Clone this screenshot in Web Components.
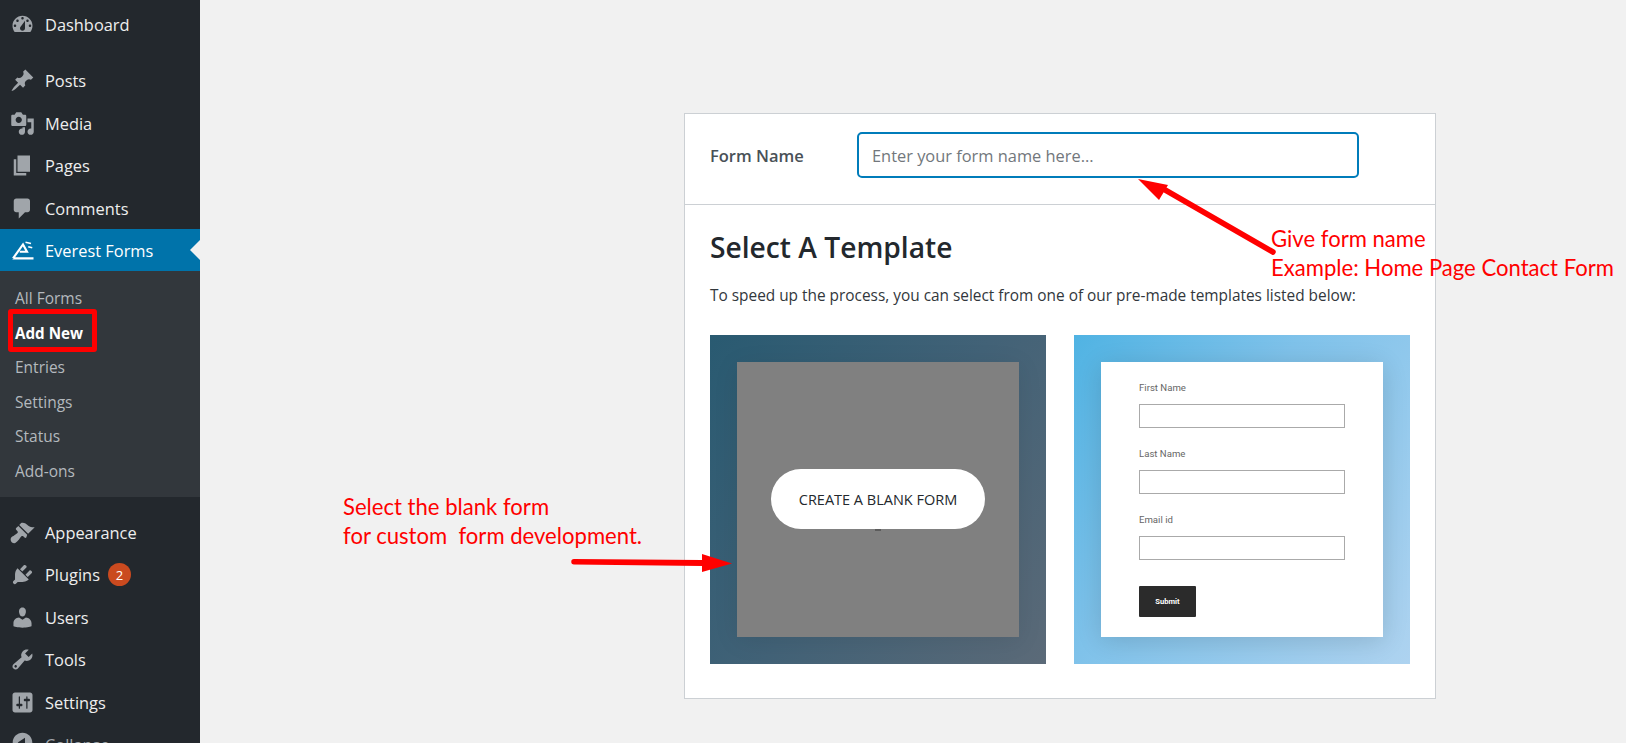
<!DOCTYPE html>
<html lang="en">
<head>
<meta charset="utf-8">
<title>Everest Forms - Add New</title>
<style>
  html, body { margin: 0; height: 743px; overflow: hidden; background: #f1f1f1; }
  body { font-family: "Open Sans", sans-serif; }
  #page { position: relative; display: flex; height: 743px; overflow: hidden; }
</style>
</head>
<body>
<div id="page">
  <wp-sidebar>
    <wp-menu-item icon="dashboard" label="Dashboard"></wp-menu-item>
    <wp-menu-separator size="14"></wp-menu-separator>
    <wp-menu-item icon="posts" label="Posts"></wp-menu-item>
    <wp-menu-item icon="media" label="Media"></wp-menu-item>
    <wp-menu-item icon="pages" label="Pages"></wp-menu-item>
    <wp-menu-item icon="comments" label="Comments"></wp-menu-item>
    <wp-menu-item icon="everest" label="Everest Forms" active></wp-menu-item>
    <wp-submenu>
      <wp-submenu-item>All Forms</wp-submenu-item>
      <wp-submenu-item current>Add New</wp-submenu-item>
      <wp-submenu-item>Entries</wp-submenu-item>
      <wp-submenu-item>Settings</wp-submenu-item>
      <wp-submenu-item>Status</wp-submenu-item>
      <wp-submenu-item>Add-ons</wp-submenu-item>
    </wp-submenu>
    <wp-menu-separator size="14"></wp-menu-separator>
    <wp-menu-item icon="appearance" label="Appearance"></wp-menu-item>
    <wp-menu-item icon="plugins" label="Plugins" badge="2"></wp-menu-item>
    <wp-menu-item icon="users" label="Users"></wp-menu-item>
    <wp-menu-item icon="tools" label="Tools"></wp-menu-item>
    <wp-menu-item icon="settings" label="Settings"></wp-menu-item>
    <wp-menu-item icon="collapse" label="Collapse" dim></wp-menu-item>
  </wp-sidebar>

  <form-panel>
    <template-tile slot="tiles" variant="blank"><blank-overlay></blank-overlay></template-tile>
    <template-tile slot="tiles" variant="contact"><mini-form></mini-form></template-tile>
  </form-panel>

  <red-note x="1271" y="225">Give form name<br>Example: Home Page Contact Form</red-note>
  <red-note x="343" y="493">Select the blank form<br>for custom&nbsp; form development.</red-note>
  <red-arrows></red-arrows>
</div>

<script>
const ICONS = {
  dashboard: '<path fill-rule="evenodd" d="M3.76 16h12.48c1.1-1.37 1.76-3.11 1.76-5 0-4.42-3.58-8-8-8s-8 3.58-8 8c0 1.89.66 3.63 1.76 5zM10 4c.55 0 1 .45 1 1s-.45 1-1 1-1-.45-1-1 .45-1 1-1zM6 6c.55 0 1 .45 1 1s-.45 1-1 1-1-.45-1-1 .45-1 1-1zm8 0c.55 0 1 .45 1 1s-.45 1-1 1-1-.45-1-1 .45-1 1-1zm-5.37 5.55L12 7v6c0 1.1-.9 2-2 2s-2-.9-2-2c0-.57.24-1.08.63-1.45zM4 10c.55 0 1 .45 1 1s-.45 1-1 1-1-.45-1-1 .45-1 1-1zm12 0c.55 0 1 .45 1 1s-.45 1-1 1-1-.45-1-1 .45-1 1-1z"/>',
  posts: '<path d="M10.44 3.02l1.82-1.82 6.36 6.35-1.83 1.82c-1.05-.68-2.48-.57-3.41.36l-.75.75c-.92.93-1.04 2.35-.35 3.41l-1.83 1.82-2.41-2.41-2.8 2.79c-.42.42-3.38 2.71-3.8 2.29s1.86-3.39 2.28-3.81l2.79-2.79L4.1 9.36l1.83-1.82c1.05.69 2.48.57 3.4-.36l.75-.75c.93-.92 1.05-2.35.36-3.41z"/>',
  media: '<path fill-rule="evenodd" d="M13 11V4c0-.55-.45-1-1-1h-1.67L9 1H5L3.67 3H2c-.55 0-1 .45-1 1v7c0 .55.45 1 1 1h10c.55 0 1-.45 1-1zM7 4.5c1.38 0 2.5 1.12 2.5 2.5S8.38 9.5 7 9.5 4.5 8.38 4.5 7 5.62 4.5 7 4.5zM14 6h5v10.5c0 1.38-1.12 2.5-2.5 2.5S14 17.88 14 16.5s1.12-2.5 2.5-2.5c.17 0 .34.02.5.05V9h-3V6zm-4 8.05V13h2v3.5c0 1.38-1.12 2.5-2.5 2.5S7 17.88 7 16.5 8.12 14 9.5 14c.17 0 .34.02.5.05z"/>',
  pages: '<path d="M6 15V2h10v13H6zm-1 1h8v2H3V5h2v11z"/>',
  comments: '<path d="M5 2h9c1.1 0 2 .9 2 2v7c0 1.1-.9 2-2 2h-2l-5 5v-5H5c-1.1 0-2-.9-2-2V4c0-1.1.9-2 2-2z"/>',
  everest: '<path fill="none" stroke="#fff" stroke-width="1.7" d="M2.4 16.3 10.4 5.2 13.6 11H7.8M2 16.3h16.8"/><path fill="none" stroke="#fff" stroke-width="1.4" d="M12.4 3.4l4.4 1M14.6 7l3.2.8"/>',
  appearance: '<path d="M14.48 11.06L7.41 3.99l1.5-1.5c.5-.56 2.3-.47 3.51.32 1.21.8 1.43 1.28 2.91 2.1 1.18.64 2.45 1.26 4.45.85zm-.71.71L6.7 4.7 4.93 6.47c-.39.39-.39 1.02 0 1.41l1.06 1.06c.39.39.39 1.03 0 1.42-.6.6-1.43 1.11-2.21 1.69-.35.26-.7.53-1.01.84C1.43 13.23.5 14.4.5 15.5c0 1.66 1.34 3 3 3 1.1 0 1.77-.93 3.12-2.27.31-.31.58-.66.84-1.01.58-.78 1.09-1.61 1.69-2.21.39-.39 1.03-.39 1.42 0l1.06 1.06c.39.39 1.02.39 1.41 0z"/>',
  plugins: '<path d="M13.11 4.36L9.87 7.6 8 5.73l3.24-3.24c.35-.34 1.05-.2 1.56.32.52.51.66 1.21.31 1.55zm-8 1.77l.91-1.12 9.01 9.01-1.19.84c-.71.71-2.63 1.16-3.82 1.16H6.14L4.9 17.26c-.59.59-1.54.59-2.12 0-.59-.58-.59-1.53 0-2.12l1.24-1.24v-3.88c0-1.13.4-3.19 1.09-3.89zm7.26 3.97l3.24-3.24c.34-.35 1.04-.21 1.55.31.52.51.66 1.21.31 1.55l-3.24 3.25z"/>',
  users: '<path d="M10 9.25c-2.27 0-2.73-3.44-2.73-3.44C7 4.02 7.82 2 9.97 2c2.16 0 2.98 2.02 2.71 3.81 0 0-.41 3.44-2.68 3.44zm0 2.57L12.72 10c2.39 0 4.52 2.33 4.52 4.53v2.49s-3.65 1.13-7.24 1.13c-3.65 0-7.24-1.13-7.24-1.13v-2.49c0-2.25 1.94-4.48 4.47-4.48z"/>',
  tools: '<path fill-rule="evenodd" d="M16.68 9.77c-1.34 1.34-3.3 1.67-4.95.99l-5.41 6.52c-.99.99-2.59.99-3.58 0s-.99-2.59 0-3.57l6.52-5.42c-.68-1.65-.35-3.61.99-4.95 1.28-1.28 3.12-1.62 4.72-1.06l-2.89 2.89 2.82 2.82 2.86-2.87c.53 1.58.18 3.39-1.08 4.65zM3.81 16.21c.4.39 1.04.39 1.43 0 .4-.4.4-1.04 0-1.43-.39-.4-1.03-.4-1.43 0-.39.39-.39 1.03 0 1.43z"/>',
  settings: '<path fill-rule="evenodd" d="M18 16V4c0-1.1-.9-2-2-2H4c-1.1 0-2 .9-2 2v12c0 1.1.9 2 2 2h12c1.1 0 2-.9 2-2zM8 11h1c.55 0 1 .45 1 1s-.45 1-1 1H8v1.5c0 .28-.22.5-.5.5s-.5-.22-.5-.5V13H6c-.55 0-1-.45-1-1s.45-1 1-1h1V5.5c0-.28.22-.5.5-.5s.5.22.5.5V11zm5-2h-1c-.55 0-1-.45-1-1s.45-1 1-1h1V5.5c0-.28.22-.5.5-.5s.5.22.5.5V7h1c.55 0 1 .45 1 1s-.45 1-1 1h-1v5.5c0 .28-.22.5-.5.5s-.5-.22-.5-.5V9z"/>',
  collapse: '<path fill-rule="evenodd" d="M10 2.16c4.33 0 7.84 3.51 7.84 7.84s-3.51 7.84-7.84 7.84S2.16 14.33 2.16 10 5.710 2.16 10 2.160zm2 11.720V6.120L6.180 9.970z"/>',
};

class WpSidebar extends HTMLElement {
  connectedCallback() {
    this.attachShadow({ mode: "open" }).innerHTML = `
      <style>
        :host { display: block; flex: none; width: 200px; height: 743px; overflow: hidden; background: #23282d; padding-top: 3px; box-sizing: border-box; }
      </style>
      <slot></slot>`;
  }
}

class WpMenuSeparator extends HTMLElement {
  connectedCallback() {
    this.attachShadow({ mode: "open" }).innerHTML = `
      <style>:host { display: block; height: ${this.getAttribute("size") || 13}px; }</style>`;
  }
}

class WpMenuItem extends HTMLElement {
  connectedCallback() {
    const icon = ICONS[this.getAttribute("icon")] || "";
    const badge = this.getAttribute("badge");
    this.attachShadow({ mode: "open" }).innerHTML = `
      <style>
        :host { display: flex; align-items: center; position: relative; height: 42.5px; color: #eee; font: 400 16.4px "Open Sans", sans-serif; }
        :host([active]) { background: #0073aa; color: #fff; height: 42px; margin-top: -.5px; }
        :host([active])::after { content: ""; position: absolute; right: 0; top: 50%; margin-top: -10px; border: 10px solid transparent; border-right-color: #f1f1f1; border-left-width: 0; }
        :host([dim]) { color: #a0a5aa; margin-top: -2px; }
        :host([dim]) .label { position: relative; top: 2px; }
        svg { flex: none; width: 25px; height: 25px; margin: 0 10px 0 10px; fill: #a0a5aa; }
        :host([icon="settings"]) svg { margin-top: .6px; }
        :host([active]) svg { fill: #fff; }
        .badge { display: inline-flex; align-items: center; justify-content: center; width: 23px; height: 23px; margin-left: 8px; border-radius: 50%; background: #ca4a1f; color: #fff; font-size: 13px; }
      </style>
      <svg viewBox="0 0 20 20">${icon}</svg>
      <span class="label">${this.getAttribute("label")}</span>
      ${badge ? `<span class="badge">${badge}</span>` : ""}`;
  }
}

class WpSubmenu extends HTMLElement {
  connectedCallback() {
    this.attachShadow({ mode: "open" }).innerHTML = `
      <style>:host { display: block; background: #32373c; padding: 10px 0 9px; }</style>
      <slot></slot>`;
  }
}

class WpSubmenuItem extends HTMLElement {
  connectedCallback() {
    this.attachShadow({ mode: "open" }).innerHTML = `
      <style>
        :host { display: flex; align-items: center; position: relative; height: 34.5px; padding-left: 15px; color: #b4b9be; font: 400 15.5px "Open Sans", sans-serif; }
        :host([current]) { color: #fff; font-weight: 700; font-size: 15.2px; }
        :host([current])::before { content: ""; position: absolute; left: 8px; top: -7px; width: 79px; height: 33px; border: 5px solid #f00; border-radius: 3px; }
      </style>
      <slot></slot>`;
  }
}

class FormPanel extends HTMLElement {
  connectedCallback() {
    this.attachShadow({ mode: "open" }).innerHTML = `
      <style>
        :host { display: block; flex: none; box-sizing: border-box; width: 752px; height: 586px; margin: 113px 0 0 484px; background: #fff; border: 1px solid #ccd0d4; color: #23282d; font-family: "Open Sans", sans-serif; }
        .head { display: flex; align-items: flex-start; box-sizing: border-box; height: 91px; padding: 18px 25px 0; border-bottom: 1px solid #ccd0d4; }
        .head label { flex: none; width: 147px; height: 46px; line-height: 48px; color: #495157; font-size: 16.5px; font-weight: 600; }
        .name { box-sizing: border-box; width: 502px; height: 46px; padding-left: 13px; line-height: 44px; border: 2px solid #007cba; border-radius: 5px; color: #72777c; font-size: 16.4px; }
        .body { padding: 0 25px; }
        h2 { margin: 0; padding-top: 22px; height: 40px; line-height: 40px; font-size: 28.2px; font-weight: 600; color: #23282d; }
        p { margin: 0; padding-top: 17px; height: 24px; line-height: 24px; font-size: 15.4px; color: #32373c; }
        .tiles { display: grid; grid-template-columns: 336px 336px; gap: 28px; margin-top: 27px; }
      </style>
      <div class="head">
        <label>Form Name</label>
        <div class="name">Enter your form name here...</div>
      </div>
      <div class="body">
        <h2>Select A Template</h2>
        <p>To speed up the process, you can select from one of our pre-made templates listed below:</p>
        <div class="tiles"><slot name="tiles"></slot></div>
      </div>`;
  }
}

class TemplateTile extends HTMLElement {
  connectedCallback() {
    this.attachShadow({ mode: "open" }).innerHTML = `
      <style>
        :host { display: block; height: 329px; box-sizing: border-box; padding: 27px; background: linear-gradient(125deg, #50b3e3 0%, #7fc2ea 40%, #aed3f0 100%); }
        :host([variant="blank"]) { background: linear-gradient(125deg, #295a71 0%, #426277 50%, #5b6a78 100%); }
        .card { height: 275px; background: #fff; box-shadow: 0 4px 24px rgba(0,0,0,.14); }
        :host([variant="blank"]) .card { background: #808080; box-shadow: 0 4px 24px rgba(0,0,0,.08); }
      </style>
      <div class="card"><slot></slot></div>`;
  }
}

class BlankOverlay extends HTMLElement {
  connectedCallback() {
    this.attachShadow({ mode: "open" }).innerHTML = `
      <style>
        :host { display: flex; align-items: center; justify-content: center; height: 100%; }
        .pill { position: relative; box-sizing: border-box; display: flex; align-items: center; justify-content: center; width: 214px; height: 60px; margin-top: -1px; padding-top: 1px; border-radius: 30px; background: #fff; color: #23282d; font: 400 14.5px "Open Sans", sans-serif; }
        .pill::after { content: ""; position: absolute; left: 104px; top: 60px; width: 6px; height: 2px; background: #5c5c5c; }
      </style>
      <div class="pill">CREATE A BLANK FORM</div>`;
  }
}

class MiniForm extends HTMLElement {
  connectedCallback() {
    const field = (label) => `<div class="lbl">${label}</div><div class="inp"></div>`;
    this.attachShadow({ mode: "open" }).innerHTML = `
      <style>
        :host { display: block; padding: 18px 38px 0; font-family: Roboto, sans-serif; }
        .lbl { height: 16px; line-height: 16px; font-size: 9.6px; color: #666; }
        .inp { box-sizing: border-box; height: 24px; margin: 8px 0 18px; border: 1px solid #aaa; }
        .btn { display: flex; align-items: center; justify-content: center; width: 57px; height: 31px; margin-top: 26px; border-radius: 1px; background: #2b2b2b; color: #fff; font-size: 7.6px; font-weight: 700; }
      </style>
      ${field("First Name")}${field("Last Name")}${field("Email id")}
      <div class="btn">Submit</div>`;
  }
}

// annotations sit on the screenshot itself, so they go by page coordinates
class RedNote extends HTMLElement {
  connectedCallback() {
    this.attachShadow({ mode: "open" }).innerHTML = `
      <style>
        :host { position: absolute; left: ${this.getAttribute("x")}px; top: ${this.getAttribute("y")}px; color: #f00; font: 400 22.1px/28.5px Lato, sans-serif; white-space: nowrap; }
      </style>
      <slot></slot>`;
  }
}

class RedArrows extends HTMLElement {
  connectedCallback() {
    this.attachShadow({ mode: "open" }).innerHTML = `
      <style>
        :host { position: absolute; left: 0; top: 0; width: 1626px; height: 743px; pointer-events: none; }
        svg { display: block; }
      </style>
      <svg width="1626" height="743" viewBox="0 0 1626 743">
        <path d="M1273 252 1160 187" stroke="#f00" stroke-width="5.500" stroke-linecap="round"/>
        <path d="M1138 179 1168 185 1159 200z" fill="#f00"/>
        <path d="M574 559 702 560v6L574 564.500a2.700 2.700 0 0 1 0-5.500z" fill="#f00"/>
        <path d="M732 563.500 702 554v18z" fill="#f00"/>
      </svg>`;
  }
}

customElements.define("wp-sidebar", WpSidebar);
customElements.define("wp-menu-separator", WpMenuSeparator);
customElements.define("wp-menu-item", WpMenuItem);
customElements.define("wp-submenu", WpSubmenu);
customElements.define("wp-submenu-item", WpSubmenuItem);
customElements.define("form-panel", FormPanel);
customElements.define("template-tile", TemplateTile);
customElements.define("blank-overlay", BlankOverlay);
customElements.define("mini-form", MiniForm);
customElements.define("red-note", RedNote);
customElements.define("red-arrows", RedArrows);
</script>
</body>
</html>
